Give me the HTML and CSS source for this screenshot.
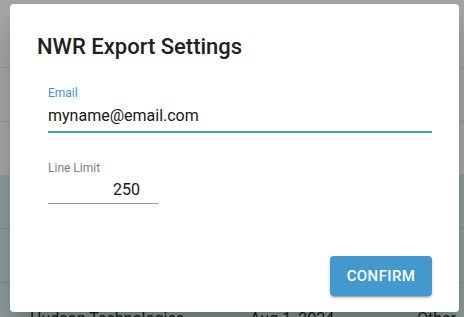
FILE: index.html
```html
<!DOCTYPE html>
<html>

<head>
    <link rel="stylesheet" href="styles.css">
</head>

<body>
    <div class="page">
        <div class="rows top-rows">
            <div class="row row-first"></div>
            <div class="row"></div>
            <div class="row"></div>
        </div>
        <div class="rows green-rows">
            <div class="row"></div>
            <div class="row"></div>
            <div class="row row-text">
                <span class="cell-name">Hudson Technologies</span>
                <span class="cell-date">Aug 1, 2024</span>
                <span class="cell-type">Other</span>
            </div>
        </div>
    </div>

    <div class="dialog">
        <p class="dialog-title">NWR Export Settings</p>

        <div class="field field-email">
            <label class="field-label label-active">Email</label>
            <div class="field-input input-active">myname@email.com</div>
        </div>

        <div class="field field-limit">
            <label class="field-label">Line Limit</label>
            <div class="field-input input-number">250</div>
        </div>

        <div class="dialog-actions">
            <button class="confirm-button">CONFIRM</button>
        </div>
    </div>
</body>

</html>
```

FILE: styles.css
```css
body {
    margin: 0;
    font-family: Roboto, "Liberation Sans", Arial, sans-serif;
    background-color: rgb(165, 165, 165);
    overflow: hidden;
}

.page {
    width: 464px;
    height: 317px;
    overflow: hidden;
}

.rows {
    display: flex;
    flex-direction: column;
    overflow: hidden;
}

.top-rows {
    background-color: rgb(165, 165, 165);
    height: 175px;
}

.green-rows {
    background-color: rgb(140, 156, 154);
    height: 142px;
}

.row {
    height: 53px;
    border-bottom: 1px solid rgb(150, 150, 150);
    flex-shrink: 0;
}

.row-first {
    height: 67px;
}

.green-rows .row {
    border-bottom-color: rgb(126, 140, 138);
}

.row-text {
    display: flex;
    align-items: flex-start;
    box-sizing: border-box;
    padding-top: 26px;
    font-size: 16px;
    line-height: 20px;
    color: rgb(25, 25, 25);
    border-bottom: none;
}

.cell-name {
    margin-left: 30px;
    width: 220px;
}

.cell-date {
    width: 167px;
}

.dialog {
    position: absolute;
    left: 10px;
    top: 4px;
    width: 449px;
    height: 308px;
    box-sizing: border-box;
    background-color: white;
    border-radius: 4px;
    box-shadow: 0 11px 15px -7px rgba(0, 0, 0, 0.2), 0 24px 38px 3px rgba(0, 0, 0, 0.14);
    padding: 27px 27px 16px 27px;
    display: flex;
    flex-direction: column;
}

.dialog-title {
    margin: 0;
    font-size: 22px;
    font-weight: 500;
    line-height: 32px;
    color: rgb(33, 33, 33);
}

.field {
    display: flex;
    flex-direction: column;
    margin-left: 11px;
}

.field-email {
    margin-top: 22px;
}

.field-limit {
    margin-top: 27px;
    width: 110px;
}

.field-label {
    font-size: 12px;
    line-height: 16px;
    color: rgb(128, 128, 128);
}

.label-active {
    color: rgb(68, 153, 206);
}

.field-input {
    font-size: 16px;
    line-height: 20px;
    color: rgb(25, 25, 25);
    border-bottom: 1px solid rgb(150, 150, 150);
}

.input-active {
    margin-top: 5px;
    padding-bottom: 5px;
    border-bottom: 2px solid rgb(68, 153, 206);
}

.input-number {
    margin-top: 4px;
    padding-bottom: 3px;
    text-align: right;
    padding-right: 18px;
}

.dialog-actions {
    margin-top: auto;
    display: flex;
    justify-content: flex-end;
}

.confirm-button {
    width: 102px;
    height: 40px;
    border: none;
    border-radius: 4px;
    background-color: rgb(67, 153, 206);
    color: white;
    font-family: Roboto, "Liberation Sans", Arial, sans-serif;
    font-size: 15px;
    font-weight: 500;
    letter-spacing: 0.4px;
    box-shadow: 0 3px 1px -2px rgba(0, 0, 0, 0.2), 0 2px 2px 0 rgba(0, 0, 0, 0.14), 0 1px 5px 0 rgba(0, 0, 0, 0.12);
}
```
